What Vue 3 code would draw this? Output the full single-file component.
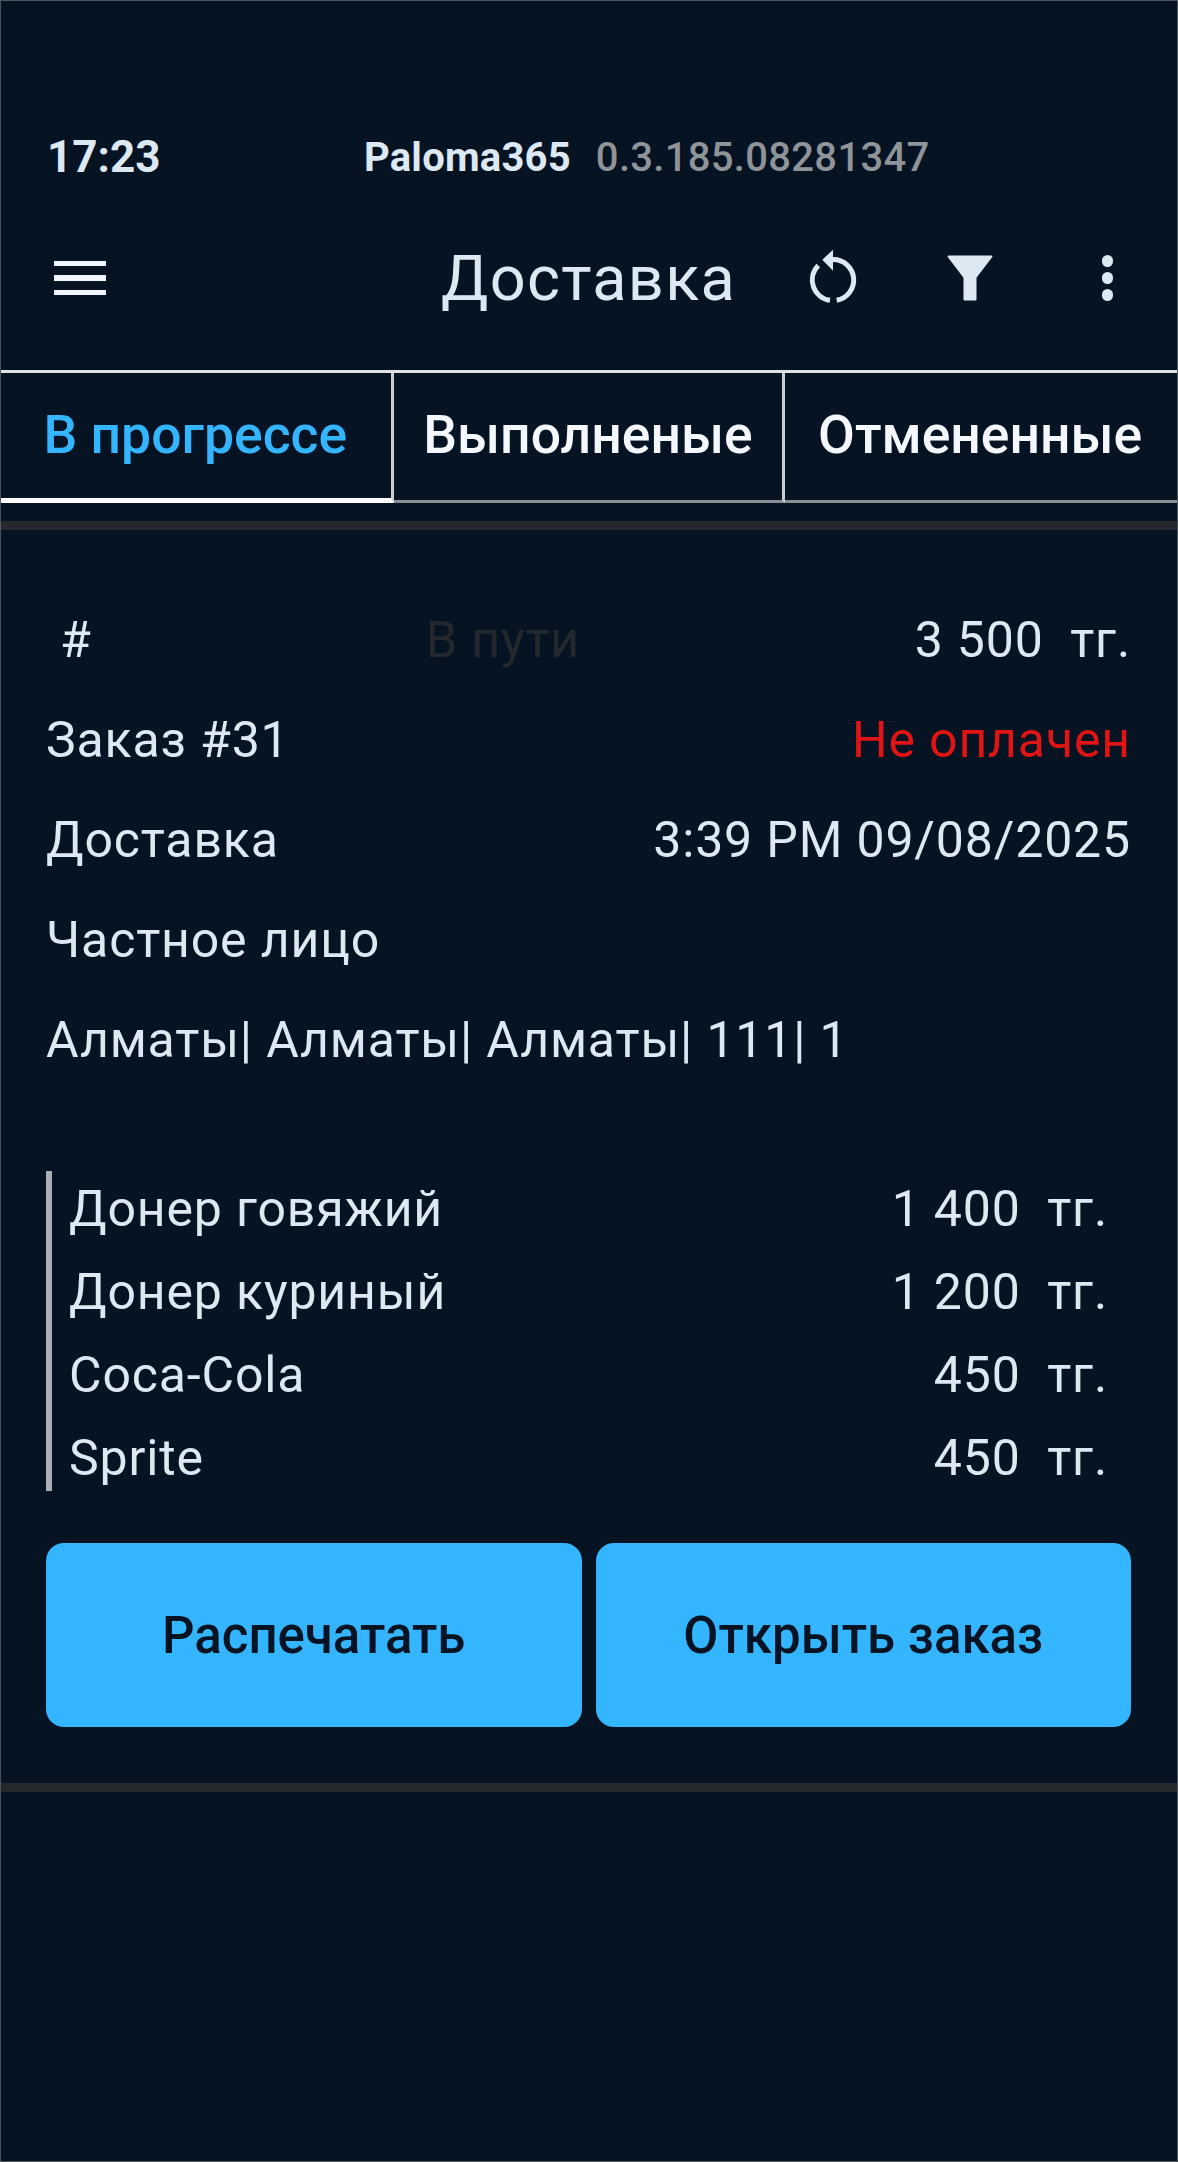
<script setup>
const items = [
  { name: 'Донер говяжий', price: '1 400' },
  { name: 'Донер куриный', price: '1 200' },
  { name: 'Coca-Cola', price: '450' },
  { name: 'Sprite', price: '450' },
]
</script>

<template>
  <div class="page">
    <div class="status">
      <span class="time">17:23</span>
      <span class="brand">Paloma365</span>
      <span class="version">0.3.185.08281347</span>
    </div>
    <header class="bar">
      <div class="burger"><i></i><i></i><i></i></div>
      <h1 class="title">Доставка</h1>
      <svg class="refresh" width="60" height="60" viewBox="0 0 60 60" fill="none">
        <path d="M30 11.5A20.5 20.5 0 0 1 33.7 52.2M27 52.3A20.5 20.5 0 0 1 15.3 17.5" stroke="#dce8f2" stroke-width="5"/>
        <path d="M19.3 11.7L30 1.7V22.7Z" fill="#dce8f2"/>
      </svg>
      <svg class="filter" width="46" height="46" viewBox="0 0 46 46">
        <path d="M1.5 1.5H44.5L28.5 22.5V44.5H17.5V22.5Z" fill="#dce8f2" stroke="#dce8f2" stroke-width="2" stroke-linejoin="round"/>
      </svg>
      <div class="dots"><i></i><i></i><i></i></div>
    </header>
    <nav class="tabs">
      <div class="tab active">В прогрессе</div>
      <div class="tab">Выполненые</div>
      <div class="tab">Отмененные</div>
    </nav>
    <div class="divider first"></div>
    <section class="order">
      <div class="row">
        <span class="hash">#</span>
        <span class="state">В пути</span>
        <span class="sum">3 500&nbsp; тг.</span>
      </div>
      <div class="row"><span>Заказ #31</span><span class="unpaid">Не оплачен</span></div>
      <div class="row"><span>Доставка</span><span>3:39 PM 09/08/2025</span></div>
      <div class="row"><span>Частное лицо</span></div>
      <div class="row"><span>Алматы| Алматы| Алматы| 111| 1</span></div>
      <ul class="items">
        <li v-for="item in items" :key="item.name">
          <span>{{ item.name }}</span>
          <span>{{ item.price }}&nbsp; тг.</span>
        </li>
      </ul>
      <div class="actions">
        <button type="button">Распечатать</button>
        <button type="button">Открыть заказ</button>
      </div>
    </section>
    <div class="divider"></div>
  </div>
</template>

<style>
html, body { margin: 0; background: #051323; }
</style>

<style scoped>
.page {
  box-sizing: border-box;
  width: 1178px;
  height: 2162px;
  background: #051323;
  border: 1px solid #4a5560;
  color: #dce8f2;
  font-family: Roboto, "Noto Sans", sans-serif;
  overflow: hidden;
}
.status {
  display: flex;
  align-items: center;
  height: 54px;
  margin-top: 129px;
  padding-left: 46px;
}
.time { width: 317px; font-size: 44px; font-weight: 700; color: #dce8f2; }
.brand { font-size: 40px; font-weight: 700; letter-spacing: 0.2px; }
.version { margin-left: 25px; font-size: 40px; font-weight: 500; color: #8f9499; letter-spacing: 0.3px; }
.bar {
  display: flex;
  align-items: center;
  height: 80px;
  margin-top: 54px;
  padding-left: 53px;
}
.burger { display: flex; flex-direction: column; gap: 9px; width: 52px; }
.burger i { display: block; height: 5.5px; background: #f2f6fd; }
.title {
  margin: 0 0 0 335px;
  width: 362px;
  font-size: 63px;
  font-weight: 400;
  letter-spacing: 1.3px;
  white-space: nowrap;
}
.refresh { display: block; }
.filter { display: block; margin-left: 84px; }
.dots { display: flex; flex-direction: column; gap: 5.6px; margin-left: 109px; }
.dots i { display: block; width: 11.4px; height: 11.4px; border-radius: 50%; background: #dce8f2; }
.tabs {
  display: flex;
  height: 133px;
  margin-top: 52px;
  border-top: 3px solid #dfe3e8;
  box-sizing: border-box;
  margin-left: -1px;
}
.tab {
  box-sizing: border-box;
  width: 393px;
  display: flex;
  align-items: center;
  justify-content: center;
  font-size: 53.5px;
  font-weight: 500;
  color: #f4f7fc;
  border-right: 3px solid #c9cdd2;
  border-bottom: 3px solid #8b8f94;
  padding-bottom: 5px;
}
.tab.active { width: 395px; }
.tab:last-child { border-right: 0; padding-right: 2px; }
.tab.active { color: #33b5ff; border-bottom: 5px solid #fff; padding-bottom: 3px; }
.divider { height: 9px; background: #25292d; margin-left: -1px; }
.divider.first { margin-top: 18px; }
.order { padding: 60px 46px 0 45px; }
.row {
  display: flex;
  justify-content: space-between;
  align-items: center;
  height: 100px;
  font-size: 50px;
  letter-spacing: 0.85px;
  white-space: nowrap;
}
.row .hash { width: 380px; padding-left: 14px; box-sizing: border-box; }
.row .state { color: #23282c; flex: 1; }
.unpaid { color: #e01414; }
.items {
  list-style: none;
  margin: 81px 0 0;
  padding: 5px 23px 0 17px;
  border-left: 6px solid #a9afb5;
  height: 320px;
  box-sizing: border-box;
  display: flex;
  flex-direction: column;
  justify-content: center;
}
.items li {
  display: flex;
  flex: none;
  justify-content: space-between;
  align-items: center;
  height: 83px;
  font-size: 50px;
  letter-spacing: 0.85px;
}
.actions {
  display: flex;
  gap: 14px;
  margin-top: 52px;
  margin-bottom: 56px;
}
.actions button {
  flex: 1;
  height: 184px;
  border: 0;
  border-radius: 18px;
  background: #33b5ff;
  color: #051323;
  font-family: inherit;
  font-size: 51px;
  font-weight: 500;
  padding: 0;
}
</style>
